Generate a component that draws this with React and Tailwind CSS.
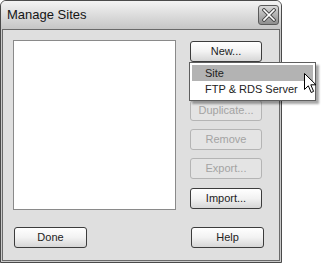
import React from 'react';

const font = { fontFamily: '"Liberation Sans", Arial, sans-serif' };

const Btn = ({ children, disabled, className = '' }) => (
  <div
    className={`flex h-[21px] w-[72px] items-center justify-center rounded-[3px] border text-[11px] ${
      disabled
        ? 'border-[#b4b4b4] bg-[#e4e4e4] text-[#a3a3a3]'
        : 'border-[#3c3c3c] bg-gradient-to-b from-[#ffffff] via-[#f2f2f2] to-[#d6d6d6] text-[#222222]'
    } ${className}`}
  >
    {children}
  </div>
);

const CloseIcon = () => (
  <svg width="14" height="14" viewBox="0 0 14 14">
    <path d="M2 2 L12 12 M12 2 L2 12" stroke="#4a4a4a" strokeWidth="3.6" strokeLinecap="square" />
    <path d="M2 2 L12 12 M12 2 L2 12" stroke="#ffffff" strokeWidth="1.6" strokeLinecap="square" />
  </svg>
);

const Cursor = () => (
  <svg width="14" height="22" viewBox="0 0 14 22">
    <path
      d="M0.5 0.5 L0.5 16.5 L4.3 12.8 L7.2 19.5 L9.6 18.4 L6.8 11.8 L12 11.8 Z"
      fill="#ffffff"
      stroke="#000000"
      strokeWidth="1"
      strokeLinejoin="miter"
    />
  </svg>
);

export default function App() {
  return (
    <div className="relative h-[263px] w-[324px] bg-white" style={font}>
      <div className="flex h-[263px] w-[282px] flex-col rounded-t-[6px] border border-[#4a4a4a] bg-[#c9c9c9]">
        <div className="flex h-[28px] items-center justify-between rounded-t-[5px] bg-gradient-to-b from-[#f3f3f3] to-[#c6c6c6] pl-[6px] pr-[2px]">
          <span className="text-[13px] text-[#151515]">Manage Sites</span>
          <div className="flex h-[20px] w-[21px] items-center justify-center rounded-[3px] border border-[#5a5a5a] bg-gradient-to-b from-[#d8d8d8] to-[#8e8e8e]">
            <CloseIcon />
          </div>
        </div>
        <div className="mx-px mb-px flex flex-1 flex-col border border-[#6a6a6a] bg-[#dfdfdf] pl-[10px] pr-[15px] pt-[10px]">
          <div className="flex gap-[14px]">
            <div className="h-[170px] w-[163px] border border-[#8a8a8a] bg-white" />
            <div className="flex flex-col gap-[8px] pt-px">
              <Btn>New...</Btn>
              <div className="h-[21px]" />
              <Btn disabled className="mt-px">Duplicate...</Btn>
              <Btn disabled>Remove</Btn>
              <Btn disabled>Export...</Btn>
              <Btn className="mt-px">Import...</Btn>
            </div>
          </div>
          <div className="mt-[17px] flex justify-between pl-px">
            <Btn className="w-[73px]">Done</Btn>
            <Btn className="w-[73px]">Help</Btn>
          </div>
        </div>
      </div>

      <div className="absolute left-[189px] top-[62px] w-[127px] border border-[#5e5e5e] bg-white p-[2px] text-[11px] text-[#222222] shadow-[3px_3px_2px_rgba(0,0,0,0.35)]">
        <div className="flex h-[16px] items-center bg-[#b3b3b3] pl-[13px]">Site</div>
        <div className="flex h-[17px] items-center pl-[13px]">FTP &amp; RDS Server</div>
      </div>
      <div className="absolute left-[304px] top-[73px]">
        <Cursor />
      </div>
    </div>
  );
}
